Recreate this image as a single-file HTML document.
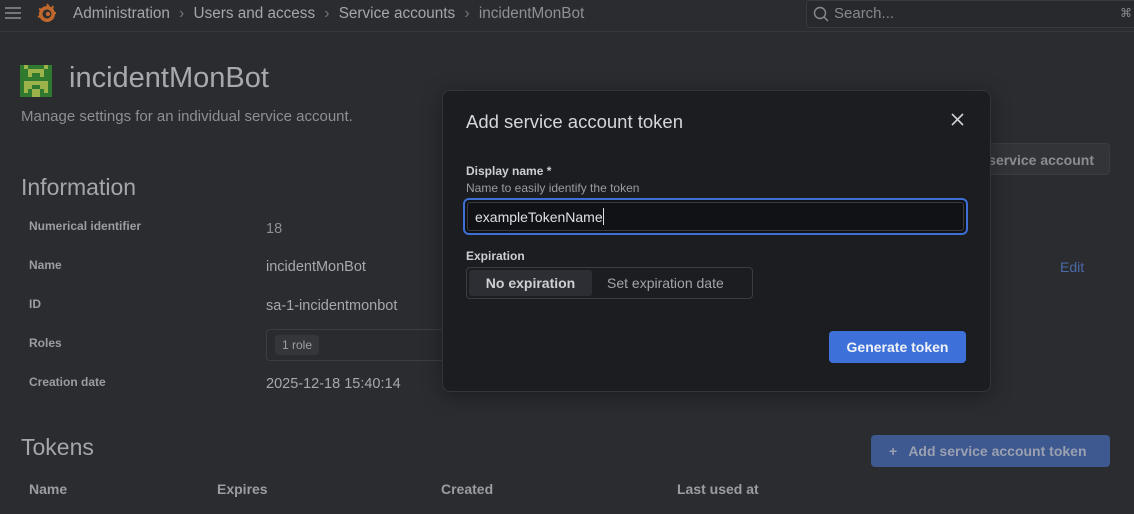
<!DOCTYPE html><html><head><style>
*{box-sizing:border-box;margin:0;padding:0}
body{width:1134px;height:514px;overflow:hidden;background:#2b2c30;font-family:"Liberation Sans",sans-serif;color:#a3a4a8;position:relative}
.a{position:absolute;white-space:nowrap}
.lbl{font-size:12px;font-weight:bold;color:#9c9da1}
.val{font-size:14.5px;color:#a7a8ac}
</style></head><body>
<div class="a" style="left:0;top:0;width:1134px;height:32px;border-bottom:1px solid #36373b"></div>
<svg class="a" style="left:4px;top:6px" width="18" height="14"><path d="M1 2h16M1 7h16M1 12h16" stroke="#8e8f93" stroke-width="1.6"/></svg>
<svg class="a" style="left:36px;top:3px" width="22" height="22" viewBox="0 0 22 22"><circle cx="11" cy="11" r="8" fill="#c0682c"/><circle cx="11" cy="11" r="4.5" fill="#2b2c30"/><circle cx="12" cy="11" r="2.2" fill="#c0682c"/><path d="M11 1l2 3M3 6l3 1M2 14l3-1M17 3l-1 3M20 10l-3 0" stroke="#c0682c" stroke-width="2"/></svg>
<div class="a" style="left:73px;top:5px;font-size:15.3px;color:#a5a6aa">Administration <span style="color:#777;margin:0 5px">›</span> Users and access <span style="color:#777;margin:0 5px">›</span> Service accounts <span style="color:#777;margin:0 5px">›</span> <span style="color:#8f9094">incidentMonBot</span></div>
<div class="a" style="left:806px;top:0;width:340px;height:28px;border:1px solid #3a3b3f;border-radius:4px;background:#28292d"></div>
<svg class="a" style="left:813px;top:6px" width="16" height="16"><circle cx="7" cy="7" r="5.5" fill="none" stroke="#8a8b8f" stroke-width="1.4"/><path d="M11 11l4 4" stroke="#8a8b8f" stroke-width="1.4"/></svg>
<div class="a" style="left:834px;top:5px;font-size:15px;color:#88898d">Search...</div>
<div class="a" style="left:1120px;top:6px;font-size:12px;color:#88898d">⌘</div>
<svg class="a" style="left:20px;top:65px" width="32" height="32" viewBox="0 0 8 8"><rect width="8" height="8" fill="#2f7a2f"/><rect x="1" y="0" width="1" height="1" fill="#9bb34a"/><rect x="6" y="0" width="1" height="1" fill="#9bb34a"/><rect x="2" y="1" width="4" height="2" fill="#9bb34a"/><rect x="3" y="2" width="2" height="1" fill="#2f7a2f"/><rect x="1" y="4" width="6" height="3" fill="#9bb34a"/><rect x="3" y="5" width="2" height="1" fill="#2f7a2f"/><rect x="2" y="6" width="1" height="1" fill="#2f7a2f"/><rect x="5" y="6" width="1" height="1" fill="#2f7a2f"/><rect x="3" y="7" width="2" height="1" fill="#9bb34a"/></svg>
<div class="a" style="left:69px;top:62px;font-size:29px;color:#a8a9ad">incidentMonBot</div>
<div class="a" style="left:21px;top:108px;font-size:15px;color:#8e8f93">Manage settings for an individual service account.</div>
<div class="a" style="left:21px;top:174px;font-size:23px;color:#a5a6aa">Information</div>
<div class="a lbl" style="left:29px;top:219px">Numerical identifier</div><div class="a val" style="left:266px;top:221px;color:#8e8f93">18</div>
<div class="a lbl" style="left:29px;top:258px">Name</div><div class="a val" style="left:266px;top:259px">incidentMonBot</div>
<div class="a lbl" style="left:29px;top:297px">ID</div><div class="a val" style="left:266px;top:298px">sa-1-incidentmonbot</div>
<div class="a lbl" style="left:29px;top:336px">Roles</div>
<div class="a" style="left:266px;top:329px;width:200px;height:32px;border:1px solid #3c3d41;border-radius:4px;background:#2a2b2f"></div>
<div class="a" style="left:275px;top:335px;height:20px;padding:3px 7px;background:#35363a;border-radius:3px;font-size:12px;color:#9fa0a4">1 role</div>
<div class="a lbl" style="left:29px;top:375px">Creation date</div><div class="a val" style="left:266px;top:376px">2025-12-18 15:40:14</div>
<div class="a" style="left:1060px;top:259px;font-size:14px;color:#4b6aa8">Edit</div>
<div class="a" style="left:960px;top:143px;width:150px;height:32px;background:#333438;border:1px solid #3b3c40;border-radius:4px;font-size:14px;font-weight:bold;color:#8c8d91;padding:8px 15px 0 0;text-align:right">service account</div>
<div class="a" style="left:21px;top:434px;font-size:23px;color:#a5a6aa">Tokens</div>
<div class="a" style="left:871px;top:435px;width:239px;height:32px;background:#3e5890;border-radius:4px;font-size:14px;font-weight:bold;color:#9aa0b0;padding:8px 0 0 18px">+&nbsp;&nbsp; Add service account token</div>
<div class="a" style="left:29px;top:481px;font-size:14px;font-weight:bold;color:#9c9da1">Name</div>
<div class="a" style="left:217px;top:481px;font-size:14px;font-weight:bold;color:#9c9da1">Expires</div>
<div class="a" style="left:441px;top:481px;font-size:14px;font-weight:bold;color:#9c9da1">Created</div>
<div class="a" style="left:677px;top:481px;font-size:14px;font-weight:bold;color:#9c9da1">Last used at</div>
<div class="a" style="left:442px;top:90px;width:549px;height:302px;background:#1b1d21;border:1px solid #33353a;border-radius:8px;box-shadow:0 4px 20px rgba(0,0,0,.35)"></div>
<div class="a" style="left:466px;top:111px;font-size:18.5px;color:#d5d6da">Add service account token</div>
<svg class="a" style="left:951px;top:113px" width="13" height="13"><path d="M1 1l11 11M12 1L1 12" stroke="#cfd0d4" stroke-width="1.6"/></svg>
<div class="a" style="left:466px;top:164px;font-size:12px;font-weight:bold;color:#ccd0d4">Display name *</div>
<div class="a" style="left:466px;top:181px;font-size:12px;color:#9a9ca1">Name to easily identify the token</div>
<div class="a" style="left:463px;top:198px;width:505px;height:37px;border:2px solid #3d6fd4;border-radius:6px;background:#111216;padding:2px"><div style="width:100%;height:100%;border:1px solid #3a3c40;border-radius:3px"></div></div>
<div class="a" style="left:475px;top:208px;font-size:14px;color:#dfe0e4">exampleTokenName<span style="display:inline-block;width:1px;height:17px;background:#ddd;vertical-align:-3px"></span></div>
<div class="a" style="left:466px;top:249px;font-size:12px;font-weight:bold;color:#ccd0d4">Expiration</div>
<div class="a" style="left:466px;top:267px;width:287px;height:32px;border:1px solid #3b3d42;border-radius:4px"></div>
<div class="a" style="left:469px;top:270px;width:123px;height:26px;background:#2c2e33;border-radius:3px;font-size:14px;font-weight:bold;color:#cfd0d4;text-align:center;padding-top:5px">No expiration</div>
<div class="a" style="left:607px;top:275px;font-size:14px;color:#a3a5aa">Set expiration date</div>
<div class="a" style="left:829px;top:331px;width:137px;height:32px;background:#3d71d9;border-radius:4px;font-size:14px;font-weight:bold;color:#f0f2f8;text-align:center;padding-top:8px">Generate token</div>
</body></html>
